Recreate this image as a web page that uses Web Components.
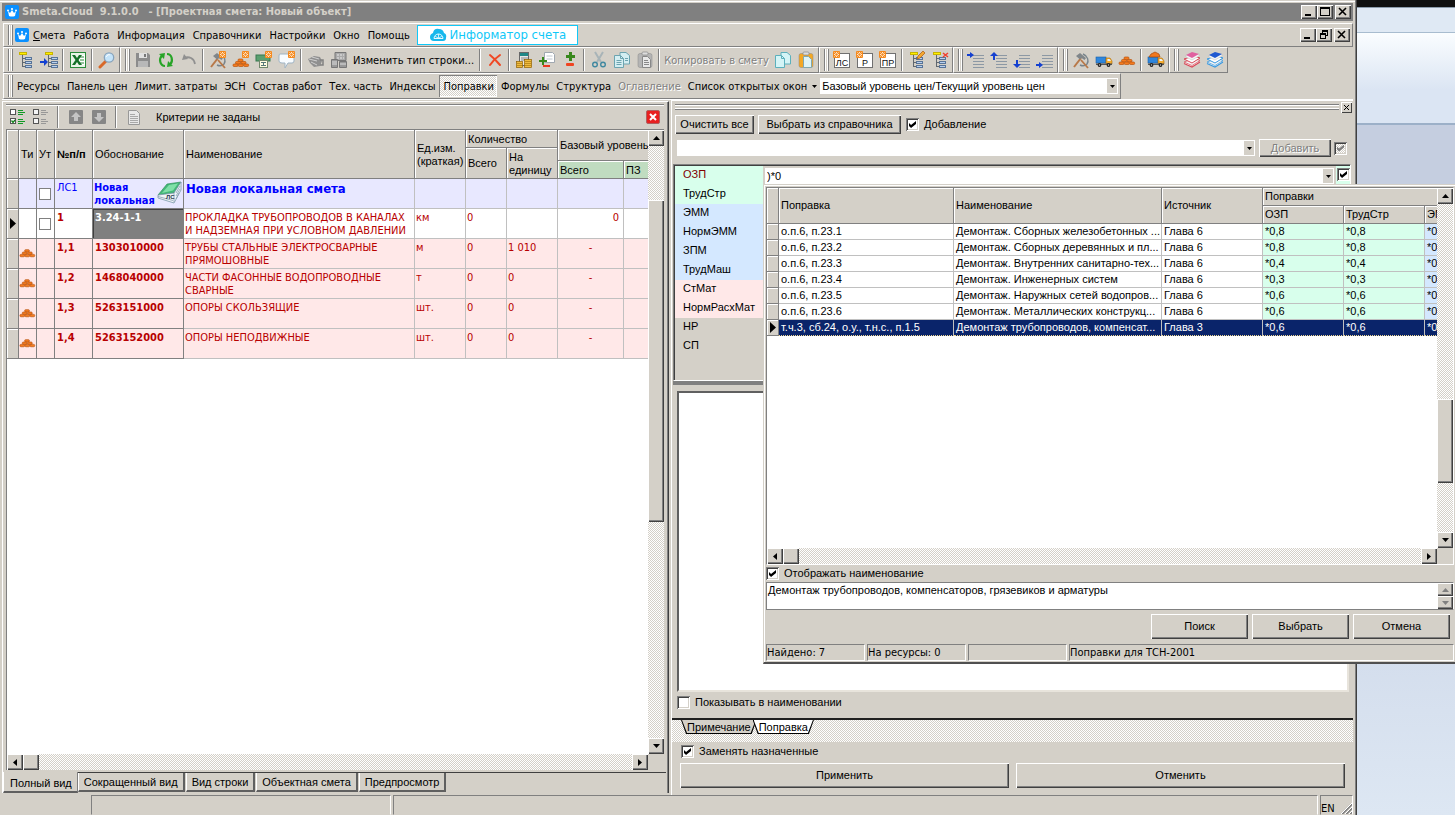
<!DOCTYPE html>
<html lang="ru">
<head>
<meta charset="utf-8">
<title>Smeta.Cloud 9.1.0.0 - [Проектная смета: Новый объект]</title>
<style>
html, body { margin: 0; height: 100%; }
body {
  --face: #d4d0c8;
  --shade: #808080;
  --dark: #404040;
  --dither: repeating-conic-gradient(#fff 0 25%, #d4d0c8 0 50%) 0 0 / 2px 2px;
  --raised: inset 1px 1px #fff, inset -1px -1px #404040, inset -2px -2px #808080;
  --ui: "DejaVu Sans Condensed", "DejaVu Sans", "Noto Sans", sans-serif;
  --sans: "Liberation Sans", sans-serif;
  font: 11px/13px var(--ui);
  color: #000;
  overflow: hidden;
}
</style>
</head>
<body>
<smeta-desktop></smeta-desktop>
<script>
const BASE = `
*, *::before, *::after { box-sizing: border-box; }
button, input, select, textarea { font: inherit; color: inherit; margin: 0; border-radius: 0; }
button { padding: 0; border: 0; background: none; white-space: nowrap; }
svg { display: block; }
`;
function define(name, css, html) {
  customElements.define(name, class extends HTMLElement {
    constructor() {
      super();
      this.attachShadow({ mode: 'open' });
    }
    connectedCallback() {
      if (this.shadowRoot.childNodes.length) return;
      const template = document.createElement('template');
      template.innerHTML = `<style>${BASE}${css}</style>${typeof html === 'function' ? html(this) : html}`;
      this.shadowRoot.append(template.content.cloneNode(true));
    }
  });
}

/* ---------- icons ---------- */
const tree = (dx = 0) => `<path d="M${5 + dx}.5 4v12M${5 + dx} 7.5h3M${5 + dx} 11.5h3M${5 + dx} 15.5h3" fill="none" stroke="#606870"/><g fill="#b8d0f0" stroke="#587498"><rect x="${8 + dx}.5" y="6.5" width="6" height="2"/><rect x="${8 + dx}.5" y="10.5" width="6" height="2"/><rect x="${8 + dx}.5" y="14.5" width="6" height="2"/></g><rect x="${2 + dx}.5" y="1.5" width="7" height="2" fill="#fff000" stroke="#c8b400"/>`;
const spark = (x, y) => `<rect x="${x}" y="${y}" width="7" height="7" rx="1" fill="#f58a1e"/><path d="M${x + 3.5} ${y + 1}v5M${x + 1} ${y + 3.5}h5M${x + 1.5} ${y + 1.5}l4 4M${x + 5.5} ${y + 1.5}l-4 4" stroke="#fff" stroke-width=".8"/><circle cx="${x + 3.5}" cy="${y + 3.5}" r="1.2" fill="#f58a1e"/>`;
const bricks = y => `<g fill="#f47c20" stroke="#b85410" stroke-width=".7"><rect x="6" y="${y}" width="5" height="2.5" rx="1"/><rect x="3.5" y="${y + 2.5}" width="5" height="2.5" rx="1"/><rect x="9" y="${y + 2.5}" width="5" height="2.5" rx="1"/><rect x="1" y="${y + 5}" width="5" height="2.5" rx="1"/><rect x="6.3" y="${y + 5}" width="5" height="2.5" rx="1"/><rect x="11.6" y="${y + 5}" width="5" height="2.5" rx="1"/></g>`;
const tools = `<path d="M2 16L9 7" stroke="#b87848" stroke-width="2"/><path d="M4 5l4-3 6 5-1.500 2-3-2-1.500 1.500z" fill="#80868a"/><path d="M11 3c5 2 6 7 4 10-2 2-5 2-7 1" fill="none" stroke="#78848c" stroke-width="1.400"/><path d="M9 9l7 8" stroke="#b87848" stroke-width="1.800"/>`;
const truck = `<rect x="1" y="6" width="10" height="6" fill="#2f86dc" stroke="#1860a8" stroke-width=".6"/><path d="M11 7h4l2 3v3h-6z" fill="#f4ac30" stroke="#a86808" stroke-width=".6"/><path d="M12.500 8h2l1.500 2h-3.500z" fill="#e8f4ff"/><path d="M1 12.500h16v1.500H1z" fill="#555"/><circle cx="4.500" cy="14" r="1.900" fill="#222"/><circle cx="13.500" cy="14" r="1.900" fill="#222"/><circle cx="4.500" cy="14" r=".7" fill="#ccc"/><circle cx="13.500" cy="14" r=".7" fill="#ccc"/>`;
const sheets = (a, b, c) => `<path d="M7 5.500V1.500h6l3.500 3V13h-7" fill="${a}" stroke="${b}"/><path d="M1.500 4.500h6l3 3v9h-9z" fill="${a}" stroke="${b}"/><path d="M7.500 4.500v3h3" fill="none" stroke="${b}"/>${c ? `<path d="M3.500 9.500h5M3.500 11.500h5M3.500 13.500h5M12 7.500h3M12 9.500h3" stroke="${b}"/>` : ''}`;
const clip = (frame, paper, line) => `<rect x="2" y="2.500" width="14" height="14" rx="2" fill="${frame}" stroke="#888" stroke-width=".5"/><rect x="6" y="1" width="6" height="3" rx="1" fill="#ddd" stroke="#888" stroke-width=".7"/><path d="M6.500 5.500h5l3 3v8h-8z" fill="${paper}" stroke="${line}"/>`;
const lines = `<path d="M6 4.500h11M6 7.500h11M6 10.500h11M6 13.500h11M6 16.500h11" stroke="#8c98a4"/>`;
const stack = (a, b) => `<path d="M1 12.500l8 3.500 8-5" fill="#fff" stroke="${b}" stroke-width="1.200"/><path d="M1 11l8 3.500 8-5-6-2z" fill="#f4f4f4" stroke="${b}" stroke-width=".7"/><path d="M1 8l8 4 8-5-6-2z" fill="#fff" stroke="${b}" stroke-width="1"/><path d="M3 4v2l6 3 7-4V3z" fill="#f4f4f4" stroke="#bbb" stroke-width=".5"/><path d="M3 4l6-3 7 2-7 4z" fill="${a}"/>`;
const doc = t => `<rect x="1.500" y="2.500" width="15" height="14" fill="#fff" stroke="#707070"/><text x="9" y="15" text-anchor="middle" font-family="Liberation Sans" font-size="9" fill="#111">${t}</text>${spark(0, 0)}`;
const listLines = c => `<path d="M9 2.500h5M9 4.500h7M9 6.500h5M9 11.500h5M9 13.500h7M9 15.500h5" stroke="${c}"/>`;
const ICONS = {
  tree: tree(),
  treeIn: tree(3) + `<path d="M0 10h4V7l4 4-4 4v-3H0z" fill="#1440d0"/>`,
  excel: `<rect x="1.500" y="1.500" width="15" height="15" fill="#e8f4e8" stroke="#2a8a3a"/><rect x="10" y="4" width="6" height="10" fill="#fff"/><path d="M11 6h4M11 9h4M11 12h4" stroke="#2a8a3a"/><path d="M3 4h3l2 3 2-3h3l-3.500 5L13 14h-3l-2-3-2 3H3l3.500-5z" fill="#147028"/>`,
  search: `<path d="M2 16l6-6" stroke="#d86828" stroke-width="3" stroke-linecap="round"/><circle cx="11" cy="6.500" r="4.700" fill="#c4e4fa" stroke="#88a4bc" stroke-width="1.300"/><path d="M8 6c1-2 3-3 4-2" stroke="#fff" fill="none"/>`,
  save: `<path d="M2 2h12l2 2v12H2z" fill="#8c8c8c"/><path d="M5 2h8v5H5z" fill="#e0e0e0"/><path d="M10 3h2v3h-2z" fill="#777"/><path d="M4 10h10v6H4z" fill="#b8b8b8"/>`,
  refresh: `<g fill="none" stroke="#28a428" stroke-width="2.200"><path d="M8 15C3 15 1.500 8 5 4.500"/><path d="M10 3c5 0 6.500 7 3 10.500"/></g><path d="M2 3l6-1-1 6zM16 15l-6 1 1-6z" fill="#28a428"/>`,
  undo: `<path d="M4 7c5-2 10 0 11 6" fill="none" stroke="#909090" stroke-width="1.800"/><path d="M2 9l2-6 4 5z" fill="#909090"/>`,
  toolsNew: tools + spark(10, 0),
  bricksNew: bricks(8) + spark(10, 0),
  machineNew: `<rect x="1" y="4" width="14" height="6" fill="#5aa070" stroke="#387850"/><rect x="4.500" y="9.500" width="8" height="7" fill="#fffbe0" stroke="#70886c"/><path d="M6 11.500h5M8.500 11v4M6 14.500h5" stroke="#577"/>` + spark(10, 0),
  noteNew: `<path d="M2 3h12q2 0 2 2v5q0 2-2 2h-4l-3 5v-5H4q-3 0-3-2V5q0-2 1-2z" fill="#f8fcff" stroke="#a0b4c4"/>` + spark(10, 0),
  helmet: `<path d="M1 8l6-3 6 1 2 4-2 5-6 1-4-4z" fill="#909090"/><path d="M2 8l8 2M5 6l7 2M4 11l6 3" stroke="#d0d0d0" fill="none"/><path d="M13 9h3v5h-3" fill="none" stroke="#808080" stroke-width="1.500"/>`,
  calcDim: `<path d="M5 1.500h11v8H5z" fill="#aaa" stroke="#777"/><path d="M7 4h7M7 7h7" stroke="#e8e8e8" stroke-dasharray="2 1"/><path d="M1.500 8.500h6v8h-6zM9.500 10.500h7v6h-7z" fill="#999" stroke="#777"/><path d="M2 11h5M2 13h5M10 13h6" stroke="#ddd"/>`,
  cross: `<path d="M4 4q5 4 10 10M14 4Q8 8 4 14" fill="none" stroke="#f04824" stroke-width="2" stroke-linecap="round"/>`,
  calc: `<rect x="4.500" y="1.500" width="9" height="13" fill="#e8e8e8" stroke="#686868"/><path d="M5 2h8v3H5z" fill="#208888"/><path d="M6 7h7M6 9h7" stroke="#888"/><rect x="1.500" y="10.500" width="6" height="6" fill="#f0bc40" stroke="#906000" stroke-width=".7"/><rect x="9.500" y="8.500" width="7" height="8" fill="#f0bc40" stroke="#906000" stroke-width=".7"/><path d="M2 12.500h5M2 14.500h5M10 10.500h6M10 12.500h6M10 14.500h6" stroke="#a87810" stroke-width=".7"/>`,
  sheetPm: `<path d="M6.500 1.500h8l2 2v8h-10z" fill="#fff" stroke="#a0a8b0"/><path d="M8.500 5h6M8.500 8h6" stroke="#c0c8d0"/><path d="M5 14h7v2H5z" fill="#e83820"/><path d="M4 6h2v3h3v2H6v3H4v-3H1V9h3z" fill="#38881c"/>`,
  plusMinus: `<path d="M8 1h3v3h3v3h-3v3H8V7H5V4h3z" fill="#38881c"/><rect x="5" y="12" width="8" height="3" rx="1" fill="#f04420"/>`,
  cut: `<path d="M5 1l6 10M13 1L7 11" stroke="#a8b4b8" stroke-width="2"/><circle cx="5" cy="13.500" r="2.300" fill="none" stroke="#4088a0" stroke-width="1.400"/><circle cx="13" cy="13.500" r="2.300" fill="none" stroke="#4088a0" stroke-width="1.400"/>`,
  copy: sheets('#d4eef2', '#6ca4b0', 1),
  paste: clip('#b4b4b4', '#e8e8e8', '#888') + `<path d="M8 9.500h4M8 11.500h5M8 13.500h5" stroke="#888"/>`,
  copyTo: sheets('#d4f4f6', '#5cb0bc', 0),
  pasteTo: clip('#f4a824', '#dff4f6', '#80a8b0'),
  ls: doc('ЛС'), r: doc('Р'), pr: doc('ПР'),
  treeEdit: tree() + `<path d="M9 8l1-3 5-5 2 2-5 5z" fill="#f4a830" stroke="#a85810" stroke-width=".7"/>`,
  treeDel: tree() + `<path d="M12 2l5 4M17 2l-5 4" stroke="#f04030" stroke-width="1.500"/>`,
  rowIn: lines + `<path d="M0 3h3V1l4 3-4 3V5H0z" fill="#1440d0"/>`,
  rowUp: lines + `<path d="M4 1l4 4H5v4H3V5H0z" fill="#1440d0"/>`,
  rowDown: lines + `<path d="M4 17l4-4H5V9H3v4H0z" fill="#1440d0"/>`,
  rowOut: lines + `<path d="M0 13h3v-2l4 3-4 3v-2H0z" fill="#1440d0"/>`,
  tools, truck,
  bricks: bricks(6),
  truckBricks: truck + `<path d="M2 6l2-3 4-2 4 2 1 3z" fill="#f07820" stroke="#a84808" stroke-width=".7"/>`,
  booksRed: stack('#e060a0', '#d84858'),
  booksBlue: stack('#2058d0', '#3898e0'),
  checkAll: `<rect x="1.500" y="1.500" width="5" height="5" fill="#fff" stroke="#555"/><rect x="1.500" y="10.500" width="5" height="5" fill="#fff" stroke="#555"/><path d="M2.500 12.500l1.500 2 2-2.500" fill="none" stroke="#108018" stroke-width="1.300"/>${listLines('#109a24')}`,
  checkNone: `<rect x="1.500" y="1.500" width="5" height="5" fill="#f4f4f4" stroke="#555"/><rect x="1.500" y="10.500" width="5" height="5" fill="#f4f4f4" stroke="#555"/>${listLines('#989898')}`,
  up: `<rect x="2" y="2" width="14" height="14" rx="1" fill="#868686"/><path d="M9 4l5 5h-3v4H7V9H4z" fill="#c4c4c4"/>`,
  down: `<rect x="2" y="2" width="14" height="14" rx="1" fill="#868686"/><path d="M9 14l5-5h-3V5H7v4H4z" fill="#c4c4c4"/>`,
  page: `<path d="M3.500 2.500h8l3 3v11h-11z" fill="#e8e8e8" stroke="#989898"/><path d="M5 6.500h5M5 8.500h8M5 10.500h8M5 12.500h8M5 14.500h8" stroke="#a8a8a8"/>`,
  logo: `<rect x="2" y="2" width="14" height="14" rx="2" fill="#0a90ff"/><path d="M5 8l2 2 2-3 2 3 2-2-1 5q-3 1-6 0z" fill="#fff"/><circle cx="9" cy="6" r="1.100" fill="#fff"/><circle cx="5" cy="7.500" r="1" fill="#fff"/><circle cx="13" cy="7.500" r="1" fill="#fff"/>`,
  cloud: `<path d="M5 15Q1 15 1 11q0-3 3-4 1-5 6-4 4 0 5 4 3 1 2 5 0 3-3 3z" fill="#18b8ec"/><path d="M5 12.500a4.500 4.500 0 0 1 9 0z" fill="none" stroke="#e8faff"/><path d="M9.500 8v4M6 10l3 2M13 10l-3 2" stroke="#e8faff" stroke-width=".8"/>`,
};
define('tool-icon', `:host { display: block; width: 18px; height: 18px; flex: none; } svg { width: 100%; height: 100%; }`,
  el => `<svg viewBox="0 0 18 18" aria-hidden="true">${ICONS[el.getAttribute('name')]}</svg>`);

define('book-icon', `:host { display: block; width: 26px; height: 24px; flex: none; }`,
  `<svg width="26" height="24" viewBox="0 0 26 24" aria-hidden="true"><path d="M1 14L10 3l14-2L17 12z" fill="#44b878" stroke="#268850" stroke-width=".6"/><path d="M5 12l7-8 9-1.500-5 7z" fill="#80e0a8"/><path d="M1 14l16-2 7-11v8l-7 13L1 17z" fill="#f0f4f8" stroke="#7898a8" stroke-width=".8"/><path d="M1 15.500l15 4M17 12v9M19 12l4-7M19 15l4-7M19 18l3-6" stroke="#88a0b0" stroke-width=".8" fill="none"/><text x="9" y="18" font-family="Liberation Sans" font-size="6" font-weight="bold" fill="#234">ЛС</text></svg>`);

/* ---------- window controls ---------- */
const CAPTIONS = {
  min: ['Свернуть', '<path d="M4 9h6v2H4z"/>'],
  max: ['Развернуть', '<path d="M3 2h10v9H3zM4 4v6h8V4z" fill-rule="evenodd"/>'],
  restore: ['Восстановить', '<path d="M6 2h6v6h-2v3H4V5h2zM7 4v1h3v2h1V4zM5 7v3h4V7z" fill-rule="evenodd"/>'],
  close: ['Закрыть', '<path d="M4 3l7 7M11 3l-7 7" stroke="#000" stroke-width="1.600"/>'],
};
define('caption-buttons', `
:host { display: flex; flex: none; }
button { width: 16px; height: 14px; background: var(--face); box-shadow: var(--raised); }
button:last-child { margin-left: 2px; }`,
  el => el.getAttribute('set').split(' ').map(k => `<button aria-label="${CAPTIONS[k][0]}"><svg width="16" height="14">${CAPTIONS[k][1]}</svg></button>`).join(''));

define('title-bar', `
:host { display: flex; align-items: center; height: 18px; background: #808080; color: #d4d0c8; padding: 0 2px 0 1px; }
h1 { margin: 0 0 0 1px; flex: 1; font: bold 11px/18px var(--ui); white-space: pre; }
h1 span { margin-left: 3px; }`,
  `<tool-icon name="logo"></tool-icon><h1>Smeta.Cloud  9.1.0.0  <span>- [Проектная смета: Новый объект]</span></h1><caption-buttons set="min max close"></caption-buttons>`);

define('classic-button', `
:host { display: block; height: 24px; font: 11px/13px var(--sans); }
button { width: 100%; height: 100%; background: var(--face); box-shadow: var(--raised); }
button:disabled { color: var(--shade); text-shadow: 1px 1px #fff; }`,
  el => `<button ${el.hasAttribute('disabled') ? 'disabled' : ''}><slot></slot></button>`);

define('classic-check', `
:host { display: flex; align-items: center; flex: none; font: 11px/13px var(--sans); }
input { appearance: none; width: 13px; height: 13px; background: #fff; box-shadow: inset 1px 1px #808080, inset -1px -1px #fff, inset 2px 2px #404040, inset -2px -2px #d4d0c8; display: grid; place-items: center; }
input:checked::before { content: ""; width: 7px; height: 7px; background: #000; clip-path: polygon(0 28%, 0 71%, 29% 100%, 100% 43%, 100% 0, 29% 57%); }
input:disabled { background: var(--dither); }
input:disabled::before { background: #808080; }
label { margin-left: 5px; white-space: nowrap; }
:host([flat]) input { width: 12px; height: 12px; box-shadow: inset 0 0 0 1px #808080; }`,
  el => `<input type="checkbox" id="c" ${el.hasAttribute('checked') ? 'checked' : ''} ${el.hasAttribute('disabled') ? 'disabled' : ''} ${el.hasAttribute('name') ? `aria-label="${el.getAttribute('name')}"` : ''}>${el.hasAttribute('name') ? '' : '<label for="c"><slot></slot></label>'}`);

define('classic-combo', `
:host { display: grid; grid-template-columns: 1fr 10px; height: 16px; background: #fff; border: 1px solid #fff; font: 11px/13px var(--sans); }
select, input { appearance: none; border: 0; outline: 0; background: #fff; padding: 0 1px; min-width: 0; height: 100%; }
.arrow { display: grid; place-items: center; background: var(--face); }`,
  el => `${el.hasAttribute('editable') ? `<input type="text" aria-label="${el.getAttribute('label')}" value="${el.getAttribute('value')}">` : `<select aria-label="${el.getAttribute('label')}"><option>${el.getAttribute('value') || ''}</option></select>`}<span class="arrow"><svg width="5" height="3"><path d="M0 0h5L2.500 3z"/></svg></span>`);

define('classic-scroll', `
:host { display: flex; background: var(--dither); flex: none; }
:host([axis="y"]) { flex-direction: column; width: 16px; }
:host([axis="x"]) { height: 16px; }
button { width: 16px; height: 16px; flex: none; background: var(--face); box-shadow: var(--raised); display: grid; place-items: center; }
i { display: block; background: var(--face); box-shadow: var(--raised); min-width: 16px; min-height: 16px; }
:host([disabled]) path { fill: #808080; }
:host([disabled]) button { height: 13px; }
b { display: block; }`,
  el => {
    const y = el.getAttribute('axis') === 'y';
    const [a, t, c] = (el.getAttribute('parts') || '0 0 1').split(' ');
    const p = y ? ['M0 4h7L3.500 0z', 'M0 0h7L3.500 4z'] : ['M4 0v7L0 3.500z', 'M0 0v7l4-3.500z'];
    const svg = d => `<svg width="${y ? 7 : 4}" height="${y ? 4 : 7}"><path d="${d}"/></svg>`;
    return `<button aria-label="Назад">${svg(p[0])}</button>${el.hasAttribute('disabled') ? '' : `<b style="flex:${a} 1 0"></b><i style="flex:${t} 1 0"></i>`}<b style="flex:${c} 1 0"></b><button aria-label="Вперёд">${svg(p[1])}</button>`;
  });

/* ---------- menu and toolbars ---------- */
define('menu-row', `
:host { display: flex; align-items: center; height: 24px; border: 1px solid #fff; border-bottom-color: #808080; border-right-color: #808080; padding: 0 4px; }
.grip { width: 5px; height: 20px; border: solid #808080; border-width: 0 1px; box-shadow: inset 1px 0 #fff, inset -1px 0 #fff; }
nav { display: flex; margin-left: 2px; gap: 8px; }
.informer { width: 161px; height: 20px; margin-left: 7px; background: #fff; border: 1px solid #10c8f8; color: #10c8f8; font: 13px/16px var(--ui); display: flex; align-items: center; justify-content: center; gap: 3px; }
caption-buttons { margin-left: auto; margin-right: -2px; }`,
  `<span class="grip"></span><tool-icon name="logo"></tool-icon><nav>${['<u>С</u>мета', 'Работа', 'Информация', 'Справочники', 'Настройки', 'Окно', 'Помощь'].map(t => `<button>${t}</button>`).join('')}</nav><button class="informer"><tool-icon name="cloud"></tool-icon>Информатор счета</button><caption-buttons set="min restore close"></caption-buttons>`);

define('tool-strip', `
:host { display: flex; align-items: center; height: 26px; flex: none; padding: 0 1px 0 4px; border: 1px solid; border-color: #fff #808080 #808080 #fff; }
.grip { width: 5px; height: 22px; margin-right: 1px; border: solid #808080; border-width: 0 1px; box-shadow: inset 1px 0 #fff, inset -1px 0 #fff; }`,
  `<span class="grip"></span><slot></slot>`);

define('tool-button', `
:host { display: block; flex: none; width: 23px; height: 22px; }
:host([text]) { width: auto; }
button { width: 100%; height: 100%; display: flex; align-items: center; justify-content: center; }
:host([disabled]) button { color: #808080; text-shadow: 1px 1px #fff; }
:host([text]) button { padding: 0 3px; }
:host([pressed]) button { background: var(--dither); box-shadow: inset 1px 1px #808080, inset -1px -1px #fff; padding: 1px 3px 0 4px; }`,
  el => `<button ${el.hasAttribute('disabled') ? 'disabled' : ''} ${el.hasAttribute('icon') ? `aria-label="${el.getAttribute('icon')}"` : ''}>${el.hasAttribute('icon') ? `<tool-icon name="${el.getAttribute('icon')}"></tool-icon>` : '<slot></slot>'}</button>`);

define('tool-sep', `:host { display: block; flex: none; width: 2px; height: 22px; margin: 0 2px; border-left: 1px solid #808080; border-right: 1px solid #fff; }`, '');

const strip = list => `<tool-strip>${list.split(' ').map(n => n === '|' ? '<tool-sep></tool-sep>' : n === 'TYPE' ? '<tool-button text class="type">Изменить тип строки...</tool-button>' : n === 'COPY' ? '<tool-button text disabled class="copy">Копировать в смету</tool-button>' : `<tool-button icon="${n}"></tool-button>`).join('')}</tool-strip>`;
define('tool-bars', `
:host { display: block; }
.row { display: flex; }
.labels tool-button { margin-right: 1px; }
.type { width: 127px; }
.copy { width: 109px; }
classic-combo { width: 298px; margin: 0 1px 0 -1px; }
svg { margin-left: 5px; }`,
  `<div class="row">${['tree treeIn | excel | search', 'save refresh undo | toolsNew bricksNew machineNew noteNew | helmet calcDim TYPE | cross | calc sheetPm plusMinus | cut copy paste | COPY copyTo pasteTo', 'ls r pr | treeEdit treeDel', 'rowIn rowUp rowDown rowOut', 'tools truck bricks | truckBricks', 'booksRed booksBlue'].map(strip).join('')}</div>
  <div class="row labels"><tool-strip>${['Ресурсы', 'Панель цен', 'Лимит. затраты', 'ЭСН', 'Состав работ', 'Тех. часть', 'Индексы'].map(t => `<tool-button text>${t}</tool-button>`).join('')}<tool-button text pressed>Поправки</tool-button><tool-button text>Формулы</tool-button><tool-button text>Структура</tool-button><tool-button text disabled>Оглавление</tool-button><tool-button text>Список открытых окон<svg width="5" height="3"><path d="M0 0h5L2.500 3z"/></svg></tool-button><classic-combo label="Уровень цен" value="Базовый уровень цен/Текущий уровень цен"></classic-combo></tool-strip></div>`);

/* ---------- estimate pane ---------- */
const ROWS = [
  ['mat', '1,1', '1303010000', 'ТРУБЫ СТАЛЬНЫЕ ЭЛЕКТРОСВАРНЫЕ ПРЯМОШОВНЫЕ', 'м', '0', '1 010', '-'],
  ['mat', '1,2', '1468040000', 'ЧАСТИ ФАСОННЫЕ ВОДОПРОВОДНЫЕ СВАРНЫЕ', 'т', '0', '0', '-'],
  ['mat', '1,3', '5263151000', 'ОПОРЫ СКОЛЬЗЯЩИЕ', 'шт.', '0', '0', '-'],
  ['mat', '1,4', '5263152000', 'ОПОРЫ НЕПОДВИЖНЫЕ', 'шт.', '0', '0', '-'],
];
define('estimate-grid', `
:host { display: grid; grid-template: 1fr 16px / 1fr 16px; min-height: 0; border-left: 1px solid #808080; border-top: 1px solid #808080; background: #fff; }
.view { overflow: hidden; min-width: 0; }
table { table-layout: fixed; width: 718px; border-collapse: separate; border-spacing: 0; color: #b80000; }
th { background: var(--face); color: #000; font: 11px/13px var(--sans); text-align: left; padding: 1px 0 0 2px; border: solid #808080; border-width: 0 1px 1px 0; box-shadow: inset 1px 1px #fff; overflow: hidden; white-space: nowrap; }
th.b { font-weight: bold; }
th.g { background: #c0dcc0; }
.h1 { height: 18px; } .h2 { height: 13px; } .h3 { height: 18px; }
td { height: 30px; padding: 2px 1px 0; vertical-align: top; border: solid #c0c0c0; border-width: 0 1px 1px 0; overflow: hidden; }
td:nth-child(-n+5) { border-color: #808080; }
td:nth-child(n+4):nth-child(-n+5) { font-weight: bold; padding-left: 2px; }
td:nth-child(1) { background: var(--face); box-shadow: inset 1px 1px #fff; padding: 0; vertical-align: middle; }
td:nth-child(2) { padding: 5px 0 0; }
td:nth-child(3) { padding: 0 2px; vertical-align: middle; }
td tool-icon { width: 17px; height: 17px; }
tr.ls { background: #e8e8ff; color: #0000ff; }
tr.ls td:nth-child(4) { font-weight: normal; }
tr.ls td:nth-child(5) { padding: 2px 0 0 1px; }
tr.ls td:nth-child(6) { font: bold 13px/16px var(--ui); padding-left: 2px; }
tr.mat { background: #ffe8e8; }
.key { display: flex; }
.key span { width: 63px; flex: none; line-height: 13px; }
td.sel { background: #808080; color: #fff; box-shadow: inset 1px 1px #404040; }
td.c { text-align: center; } td.r { text-align: right; padding-right: 4px; }
.corner { background: var(--face); }`,
  `<div class="view"><table>
  <colgroup>${[12, 18, 18, 38, 91, 231, 51, 41, 51, 66, 101].map(w => `<col style="width:${w}px">`).join('')}</colgroup>
  <thead>
  <tr class="h1"><th rowspan="3"></th><th rowspan="3">Ти</th><th rowspan="3">Ут</th><th rowspan="3" class="b">№п/п</th><th rowspan="3">Обоснование</th><th rowspan="3">Наименование</th><th rowspan="3">Ед.изм.<br>(краткая)</th><th colspan="2">Количество</th><th colspan="2" rowspan="2">Базовый уровень</th></tr>
  <tr class="h2"><th rowspan="2">Всего</th><th rowspan="2">На<br>единицу</th></tr>
  <tr class="h3"><th class="g">Всего</th><th class="g">ПЗ</th></tr>
  </thead><tbody>
  <tr class="ls"><td></td><td></td><td><classic-check flat name="Учитывать ЛС1"></classic-check></td><td>ЛС1</td><td><div class="key"><span>Новая локальная</span><book-icon></book-icon></div></td><td>Новая локальная смета</td><td></td><td></td><td></td><td></td><td></td></tr>
  <tr><td><svg width="11" height="11"><path d="M3 0v11l6-5.500z"/></svg></td><td></td><td><classic-check flat name="Учитывать 1"></classic-check></td><td>1</td><td class="sel">3.24-1-1</td><td>ПРОКЛАДКА ТРУБОПРОВОДОВ В КАНАЛАХ И НАДЗЕМНАЯ ПРИ УСЛОВНОМ ДАВЛЕНИИ</td><td>км</td><td>0</td><td></td><td class="r">0</td><td></td></tr>
  ${ROWS.map(r => `<tr class="mat"><td></td><td><tool-icon name="bricks"></tool-icon></td><td></td>${r.slice(1).map((t, i) => `<td${i === 6 ? ' class="c"' : ''}>${t}</td>`).join('')}<td></td></tr>`).join('')}
  </tbody></table></div>
  <classic-scroll axis="y" parts="54 323 216"></classic-scroll>
  <classic-scroll axis="x" parts="0 0 1"></classic-scroll><div class="corner"></div>`);

define('estimate-pane', `
:host { display: flex; flex-direction: column; min-width: 0; border: solid; border-width: 1px 1px 0 1px; border-color: #fff #404040 #fff #fff; box-shadow: inset -1px 0 #808080; padding: 2px 4px 0 3px; }
.bar { display: flex; align-items: center; height: 25px; flex: none; border-top: 1px solid #808080; box-shadow: inset 0 1px #fff; padding: 0 4px 0 0; }
.bar tool-sep { margin: 0 5px; }
.bar span { flex: 1; margin-left: 11px; font: 11px/13px var(--sans); }
.x { width: 14px; height: 14px; background: #e82020; border: 1px solid #b06060; border-radius: 2px; display: grid; place-items: center; }
estimate-grid { flex: 1; }
.tabs { display: flex; align-items: flex-start; height: 21px; margin: 2px -2px 0 -3px; flex: none; font: 11px/13px var(--sans); border-top: 1px solid #404040; }
.tabs button { height: 19px; background: var(--face); border: solid; border-width: 0 2px 2px 1px; border-color: #fff #606060 #606060 #fff; padding: 1px 5px 0; margin-right: 1px; }
.tabs button:first-child { height: 21px; margin-top: -1px; padding: 4px 5px 0 6px; margin-right: 0; border-right-width: 1px; border-right-color: #808080; }`,
  `<div class="bar"><tool-button icon="checkAll"></tool-button><tool-button icon="checkNone"></tool-button><tool-sep></tool-sep><tool-button icon="up"></tool-button><tool-button icon="down"></tool-button><tool-sep></tool-sep><tool-button icon="page"></tool-button><span>Критерии не заданы</span><button class="x" aria-label="Сбросить"><svg width="8" height="8"><path d="M1 1l6 6M7 1L1 7" stroke="#fff" stroke-width="2"/></svg></button></div>
  <estimate-grid></estimate-grid>
  <div class="tabs">${['Полный вид', 'Сокращенный вид', 'Вид строки', 'Объектная смета', 'Предпросмотр'].map(t => `<button>${t}</button>`).join('')}</div>`);

/* ---------- corrections pane ---------- */
define('corrections-pane', `
:host { display: flex; flex-direction: column; min-width: 0; border-left: 1px solid #fff; border-top: 1px solid #fff; font: 11px/13px var(--sans); }
.grip { display: flex; align-items: center; height: 12px; margin: 0 1px 0 3px; gap: 2px; flex: none; }
.grip span { flex: 1; height: 6px; border: solid #808080; border-width: 1px 0; box-shadow: inset 0 1px #fff, inset 0 -1px #fff; }
.grip button { width: 11px; height: 11px; background: var(--face); box-shadow: inset 1px 1px #fff, inset -1px -1px #404040; display: grid; place-items: center; }
.top { display: flex; gap: 4px; margin: 2px 0 0 3px; }
.top classic-button { height: 19px; }
.top classic-check { margin-left: 1px; }
.clear { width: 79px; }
.book { width: 143px; }
.pick { display: flex; align-items: center; margin: 5px 6px 0 5px; gap: 4px; }
.pick classic-combo { flex: 1; }
.pick classic-button { width: 72px; height: 18px; }
.pick classic-check { margin-left: -1px; }
.inner { height: 217px; flex: none; margin: 7px 2px 0 1px; display: grid; grid-template-columns: 88px 1fr; border: 1px solid #808080; border-color: #808080 #fff #fff #808080; box-shadow: inset 1px 1px #404040; padding: 1px 0 0 1px; }
ul { margin: 0; padding: 0; list-style: none; }
li { height: 19px; line-height: 17px; padding-left: 8px; background: #d8ffec; }
li:nth-child(n+3) { background: #d4e8ff; } li:nth-child(n+7) { background: #ffe8e8; } li:nth-child(n+9) { background: none; }
li:first-child { color: #800000; }
.edit { display: flex; height: 19px; }
.edit classic-combo { flex: 1; margin: 2px 2px 0; }
.edit classic-check { background: #d8ffec; padding: 0 0 2px 1px; }
.split { height: 4px; background: #808080; flex: none; margin: 0 1px; }
textarea { flex: 1; min-height: 0; margin: 6px 4px 0 5px; resize: none; outline: 0; background: #fff; border: 2px solid; border-color: #606060 #e8e4dc #e8e4dc #606060; }
.show { margin: 4px 0 0 5px; }
.sheet { display: flex; height: 24px; flex: none; margin: 9px 0 0; border-top: 2px solid #202020; background: var(--dither); padding-left: 9px; }
.sheet button { height: 14px; line-height: 12px; padding: 0 6px; position: relative; background: #000; clip-path: polygon(0 0, 100% 0, calc(100% - 5px) 100%, 5px 100%); }
.sheet button + button { margin-left: -4px; }
.sheet button::before { content: ""; position: absolute; inset: 0 1px 1px; background: var(--face); clip-path: inherit; }
.sheet button + button::before { background: #fff; }
.sheet span { position: relative; }
.rep { margin: 3px 0 0 9px; }
.acts { display: grid; grid-template-columns: 1fr 1fr; gap: 7px; margin: 5px 8px 7px; }
.acts classic-button { height: 25px; }`,
  `<div class="grip"><span></span><button aria-label="Закрыть панель"><svg width="7" height="7"><path d="M1 1l5 5M6 1L1 6" stroke="#000"/></svg></button></div>
  <div class="top"><classic-button class="clear">Очистить все</classic-button><classic-button class="book">Выбрать из справочника</classic-button><classic-check checked>Добавление</classic-check></div>
  <div class="pick"><classic-combo label="Поправка" value=""></classic-combo><classic-button disabled>Добавить</classic-button><classic-check checked disabled name="Добавление поправки"></classic-check></div>
  <div class="inner"><ul>${['ОЗП', 'ТрудСтр', 'ЭММ', 'НормЭММ', 'ЗПМ', 'ТрудМаш', 'СтМат', 'НормРасхМат', 'НР', 'СП'].map(t => `<li>${t}</li>`).join('')}</ul><div class="edit"><classic-combo editable label="ОЗП" value=")*0"></classic-combo><classic-check checked name="ОЗП"></classic-check></div></div>
  <div class="split"></div>
  <textarea aria-label="Примечание"></textarea>
  <classic-check class="show">Показывать в наименовании</classic-check>
  <div class="sheet"><button><span>Примечание</span></button><button><span>Поправка</span></button></div>
  <classic-check class="rep" checked>Заменять назначенные</classic-check>
  <div class="acts"><classic-button>Применить</classic-button><classic-button>Отменить</classic-button></div>`);

/* ---------- lookup popup ---------- */
const LOOKUP = [
  ['о.п.6, п.23.1', 'Демонтаж. Сборных железобетонных ...', 'Глава 6', '*0,8'],
  ['о.п.6, п.23.2', 'Демонтаж. Сборных деревянных и пл...', 'Глава 6', '*0,8'],
  ['о.п.6, п.23.3', 'Демонтаж. Внутренних санитарно-тех...', 'Глава 6', '*0,4'],
  ['о.п.6, п.23.4', 'Демонтаж. Инженерных систем', 'Глава 6', '*0,3'],
  ['о.п.6, п.23.5', 'Демонтаж. Наружных сетей водопров...', 'Глава 6', '*0,6'],
  ['о.п.6, п.23.6', 'Демонтаж. Металлических конструкц...', 'Глава 6', '*0,6'],
  ['т.ч.3, сб.24, о.у., т.н.с., п.1.5', 'Демонтаж трубопроводов, компенсат...', 'Глава 3', '*0,6'],
];
define('lookup-popup', `
:host { display: flex; flex-direction: column; background: var(--face); border: solid; border-width: 1px 0 2px 1px; border-color: #d4d0c8 #d4d0c8 #505050 #d4d0c8; box-shadow: inset 1px 1px #fff; padding: 2px 1px 0 2px; font: 11px/13px var(--sans); }
.grid { flex: 1; min-height: 0; display: grid; grid-template: 1fr 16px / 1fr 16px; border: 1px solid #808080; border-right-color: #fff; border-bottom-color: #fff; background: #fff; }
.view { overflow: hidden; min-width: 0; }
table { table-layout: fixed; width: 739px; border-collapse: separate; border-spacing: 0; }
th { background: var(--face); font-weight: normal; text-align: left; padding: 0 0 0 2px; border: solid #808080; border-width: 0 1px 1px 0; box-shadow: inset 1px 1px #fff; height: 18px; }
td { height: 16px; line-height: 15px; padding: 0 2px; border: solid #c0c0c0; border-width: 0 1px 1px 0; white-space: nowrap; overflow: hidden; }
td:first-child { background: var(--face); border-color: #808080; box-shadow: inset 1px 1px #fff; padding: 0; }
td:nth-child(5), td:nth-child(6) { background: #d8ffec; }
td:nth-child(7) { background: #d4e8ff; }
tr.sel td:nth-child(n+2) { background: #0a246a; color: #fff; border-bottom: 1px dotted #f0d890; }
.corner { background: var(--face); }
.name { margin-top: 2px; }
.memo { display: flex; height: 28px; flex: none; margin-top: 2px; border: 1px solid #808080; border-color: #808080 #fff #808080 #808080; }
.memo textarea { flex: 1; min-width: 0; border: 0; outline: 0; resize: none; padding: 1px 1px 0; background: #fff; overflow: hidden; }
.acts { display: flex; justify-content: flex-end; gap: 4px; padding: 4px 4px 0 0; }
.acts classic-button { width: 97px; height: 25px; }
.status { display: flex; gap: 2px; margin-top: 5px; height: 17px; flex: none; margin-bottom: 1px; font: 11px/15px var(--ui); }
.status span { width: 99px; border: 1px solid; border-color: #808080 #fff #fff #808080; }
.status span:last-child { flex: 1; }`,
  `<div class="grid"><div class="view"><table>
  <colgroup>${[12, 175, 208, 101, 81, 81, 81].map(w => `<col style="width:${w}px">`).join('')}</colgroup>
  <thead><tr><th rowspan="2"></th><th rowspan="2">Поправка</th><th rowspan="2">Наименование</th><th rowspan="2">Источник</th><th colspan="3">Поправки</th></tr><tr><th>ОЗП</th><th>ТрудСтр</th><th>ЭММ</th></tr></thead>
  <tbody>${LOOKUP.map((r, i) => `<tr${i === 6 ? ' class="sel"' : ''}><td>${i === 6 ? '<svg width="11" height="11"><path d="M3 0v11l6-5.500z"/></svg>' : ''}</td><td>${r[0]}</td><td>${r[1]}</td><td>${r[2]}</td><td>${r[3]}</td><td>${r[3]}</td><td>*0</td></tr>`).join('')}</tbody></table></div>
  <classic-scroll axis="y" parts="194 84 49"></classic-scroll><classic-scroll axis="x" parts="0 0 1"></classic-scroll><div class="corner"></div></div>
  <classic-check class="name" checked>Отображать наименование</classic-check>
  <div class="memo"><textarea aria-label="Наименование">Демонтаж трубопроводов, компенсаторов, грязевиков и арматуры</textarea><classic-scroll axis="y" disabled></classic-scroll></div>
  <div class="acts"><classic-button>Поиск</classic-button><classic-button>Выбрать</classic-button><classic-button>Отмена</classic-button></div>
  <div class="status"><span>Найдено: 7</span><span>На ресурсы: 0</span><span></span><span>Поправки для ТСН-2001</span></div>`);

define('status-bar', `
:host { display: grid; grid-template-columns: 87px 300px 1fr 33px; gap: 2px; height: 20px; flex: none; }
span { border: 1px solid; border-color: #808080 #fff transparent #808080; padding: 6px 0 0; display: flex; justify-content: space-between; overflow: hidden; }
span:first-of-type { border: 0; }
svg { flex: none; }`,
  `<span></span><span></span><span></span><span>EN<svg width="13" height="13"><path d="M2 13L13 2M6 13l7-7M10 13l3-3" stroke="#808080" stroke-width="2"/><path d="M1 13L13 1M5 13l8-8M9 13l4-4" stroke="#fff"/></svg></span>`);

define('smeta-desktop', `
:host { display: block; position: relative; height: 100vh; min-height: 700px; overflow: hidden;
  background: linear-gradient(#101010 0 7px, #8c9cac 7px 8px, #dfe9f4 8px 32px, #a8bccf 32px 33px, #fafdff 33px, #dbe5f3 90px, #dbe5f3 123px, #9cb0c8 123px 125px, #c5cee0 125px 200px, #d4deed 660px, #dde7f3); }
.window { display: flex; flex-direction: column; width: calc(100% - 98px); height: 100%; background: var(--face); padding: 3px 4px 0 2px; box-shadow: inset -1px 0 #404040, inset -2px 0 #808080, inset 0 1px #d4d0c8, inset 0 2px #fff; }
menu-row { margin: 2px 0 0 1px; }
tool-bars { margin-left: 1px; }
main { flex: 1; min-height: 0; display: grid; grid-template-columns: 667fr 682fr; gap: 2px; border-top: 1px solid #fff; }
estimate-pane { margin: 1px 0 2px; }
lookup-popup { position: absolute; left: 763px; right: 0; top: 184px; height: 480px; }`,
  `<div class="window"><title-bar></title-bar><menu-row></menu-row><tool-bars></tool-bars><main><estimate-pane></estimate-pane><corrections-pane></corrections-pane></main><status-bar></status-bar></div><lookup-popup></lookup-popup>`);
</script>
</body>
</html>
